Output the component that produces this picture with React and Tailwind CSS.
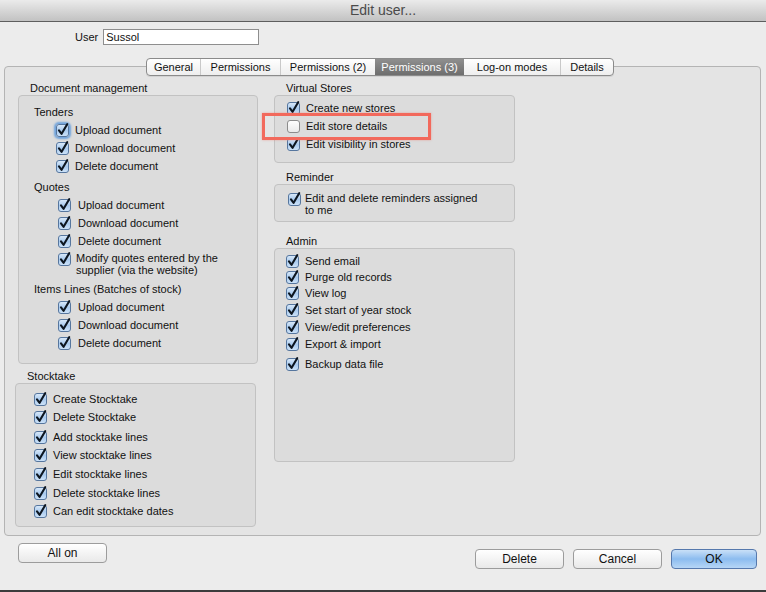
import React from 'react';

const Check = ({ checked = true, focus = false }) => (
  <span className={`inline-flex shrink-0 w-[13px] h-[13px] rounded-[3px] ${focus ? 'shadow-[0_0_2px_2px_#6fa3dc]' : ''}`}>
    <svg width="13" height="13" viewBox="0 0 13 13" overflow="visible">
      <defs>
        <linearGradient id="cbOn" x1="0" y1="0" x2="0" y2="1">
          <stop offset="0" stopColor="#dcebfa" />
          <stop offset="0.5" stopColor="#a9caee" />
          <stop offset="1" stopColor="#cfe4f9" />
        </linearGradient>
        <linearGradient id="cbOff" x1="0" y1="0" x2="0" y2="1">
          <stop offset="0" stopColor="#ffffff" />
          <stop offset="1" stopColor="#e9e9e9" />
        </linearGradient>
      </defs>
      <rect
        x="0.5"
        y="0.5"
        width="12"
        height="12"
        rx="2.5"
        fill={checked ? 'url(#cbOn)' : 'url(#cbOff)'}
        stroke={checked ? '#56769e' : '#8c8c8c'}
      />
      {checked && (
        <path
          d="M3 6.4 L5.6 9.8 L11.2 0.2"
          fill="none"
          stroke="#0d1620"
          strokeWidth="2.1"
          strokeLinecap="round"
          strokeLinejoin="round"
        />
      )}
    </svg>
  </span>
);

const Row = ({ label, h = 'h-[18px]', gap = 'gap-[6px]', extra = '', checked = true, focus = false }) => (
  <div className={`flex items-center ${h} ${gap} ${extra}`}>
    <Check checked={checked} focus={focus} />
    <span className="whitespace-nowrap">{label}</span>
  </div>
);

const Heading = ({ children, extra = '' }) => (
  <div className={`h-[18px] flex items-center ${extra}`}>{children}</div>
);

const tabs = [
  { label: 'General', w: 'w-[53px]' },
  { label: 'Permissions', w: 'w-[80px]' },
  { label: 'Permissions (2)', w: 'w-[95px]' },
  { label: 'Permissions (3)', w: 'w-[89px]', active: true },
  { label: 'Log-on modes', w: 'w-[96px]' },
  { label: 'Details', w: 'w-[53px]' },
];

const MacButton = ({ children, w, primary = false }) => (
  <button
    className={`${w} h-[20px] rounded-[4px] border text-[12px] leading-none flex items-center justify-center ${
      primary
        ? 'border-[#5679ad] bg-gradient-to-b from-[#c9e0f7] via-[#8cbcef] to-[#b6d6f6] text-[#0e0e0e]'
        : 'border-[#9c9c9c] bg-gradient-to-b from-white to-[#e9e9e9] text-[#111]'
    }`}
  >
    {children}
  </button>
);

export default function App() {
  return (
    <div
      className="w-[766px] h-[592px] bg-[#ececec] flex flex-col text-[11px] text-[#111] overflow-hidden"
      style={{ fontFamily: '"Liberation Sans", Arial, sans-serif' }}
    >
      {/* title bar */}
      <div className="h-[22px] shrink-0 bg-gradient-to-b from-[#ebebeb] to-[#c2c2c2] border-b border-[#5e5e5e] flex items-center justify-center text-[14px] text-[#4a4a4a]">
        Edit user...
      </div>

      {/* user field */}
      <div className="mt-[7px] h-[16px] flex items-center pl-[75px] gap-[5px]">
        <span>User</span>
        <div className="w-[156px] h-[16px] bg-white border border-[#8e8e8e] flex items-center pl-[2px]">Sussol</div>
      </div>

      {/* tabs */}
      <div className="mt-[13px] pl-[146px] relative z-10 flex">
        <div className="flex h-[18px] rounded-[4px] border border-[#8b8b8b] bg-gradient-to-b from-white to-[#eeeeee] overflow-hidden shadow-[0_1px_0_rgba(0,0,0,0.08)]">
          {tabs.map((t, i) => (
            <div
              key={t.label}
              className={`${t.w} flex items-center justify-center ${
                t.active
                  ? 'bg-gradient-to-b from-[#8f8f8f] to-[#6e6e6e] text-white'
                  : i > 0 && !tabs[i - 1].active
                  ? 'border-l border-[#c9c9c9]'
                  : ''
              }`}
            >
              {t.label}
            </div>
          ))}
        </div>
      </div>

      {/* tab panel */}
      <div className="-mt-[10px] ml-[4px] w-[757px] h-[470px] shrink-0 bg-[#e4e4e4] border border-[#b4b4b4] rounded-[4px] pt-[14px] flex">
        {/* left column */}
        <div className="w-[253px] flex flex-col">
          <div className="ml-[25px] h-[14px] flex items-center">Document management</div>
          <div className="ml-[13px] w-[240px] h-[269px] bg-[#dcdcdc] border border-[#c2c2c2] rounded-[4px] pt-[7px] pl-[15px]">
            <Heading>Tenders</Heading>
            <div className="pl-[22px]">
              <Row label="Upload document" focus />
              <Row label="Download document" />
              <Row label="Delete document" />
            </div>
            <Heading extra="mt-[3px]">Quotes</Heading>
            <div className="pl-[24px]">
              <Row label="Upload document" gap="gap-[7px]" />
              <Row label="Download document" gap="gap-[7px]" />
              <Row label="Delete document" gap="gap-[7px]" />
              <div className="flex items-start gap-[5px] mt-[2px]">
                <div className="pt-[1px]">
                  <Check />
                </div>
                <div className="leading-[12px]">
                  Modify quotes entered by the
                  <br />
                  supplier (via the website)
                </div>
              </div>
            </div>
            <Heading extra="mt-[4px]">Items Lines (Batches of stock)</Heading>
            <div className="pl-[24px]">
              <Row label="Upload document" gap="gap-[7px]" />
              <Row label="Download document" gap="gap-[7px]" />
              <Row label="Delete document" gap="gap-[7px]" />
            </div>
          </div>

          <div className="ml-[22px] mt-[5px] h-[14px] flex items-center">Stocktake</div>
          <div className="ml-[10px] w-[241px] h-[144px] bg-[#dcdcdc] border border-[#c2c2c2] rounded-[4px] pt-[6px] pl-[18px]">
            <Row label="Create Stocktake" />
            <Row label="Delete Stocktake" />
            <Row label="Add stocktake lines" extra="mt-[2px]" />
            <Row label="View stocktake lines" />
            <Row label="Edit stocktake lines" extra="mt-[1px]" />
            <Row label="Delete stocktake lines" extra="mt-[1px]" />
            <Row label="Can edit stocktake dates" />
          </div>
        </div>

        {/* right column */}
        <div className="ml-[16px] w-[241px] flex flex-col">
          <div className="ml-[12px] h-[14px] flex items-center">Virtual Stores</div>
          <div className="relative h-[68px] bg-[#dcdcdc] border border-[#c2c2c2] rounded-[4px] pt-[3px] pl-[12px]">
            <Row label="Create new stores" />
            <Row label="Edit store details" checked={false} />
            <Row label="Edit visibility in stores" />
            <div className="absolute left-[-13px] top-[17px] w-[169px] h-[27px] border-[3px] border-[#f2695c] shadow-[0_0_2px_rgba(242,105,92,0.5)]" />
          </div>

          <div className="ml-[12px] mt-[7px] h-[14px] flex items-center">Reminder</div>
          <div className="h-[38px] bg-[#dcdcdc] border border-[#c2c2c2] rounded-[4px] pt-[7px] pl-[13px] flex items-start gap-[4px]">
            <div className="pt-[1px]">
              <Check />
            </div>
            <div className="leading-[12px]">
              Edit and delete reminders assigned
              <br />
              to me
            </div>
          </div>

          <div className="ml-[12px] mt-[12px] h-[14px] flex items-center">Admin</div>
          <div className="h-[214px] bg-[#dcdcdc] border border-[#c2c2c2] rounded-[4px] pt-[4px] pl-[11px]">
            <Row label="Send email" h="h-[16px]" />
            <Row label="Purge old records" h="h-[16px]" />
            <Row label="View log" h="h-[16px]" />
            <Row label="Set start of year stock" h="h-[17px]" extra="mt-[1px]" />
            <Row label="View/edit preferences" h="h-[17px]" />
            <Row label="Export & import" h="h-[17px]" />
            <Row label="Backup data file" h="h-[17px]" extra="mt-[3px]" />
          </div>
        </div>
      </div>

      {/* bottom buttons */}
      <div className="flex items-start mt-[7px] pl-[18px] pr-[9px]">
        <MacButton w="w-[89px]">All on</MacButton>
        <div className="ml-auto mt-[6px] flex gap-[9px]">
          <MacButton w="w-[89px]">Delete</MacButton>
          <MacButton w="w-[89px]">Cancel</MacButton>
          <MacButton w="w-[86px]" primary>
            OK
          </MacButton>
        </div>
      </div>

      <div className="mt-auto h-[2px] bg-[#3c3c3c]" />
    </div>
  );
}
